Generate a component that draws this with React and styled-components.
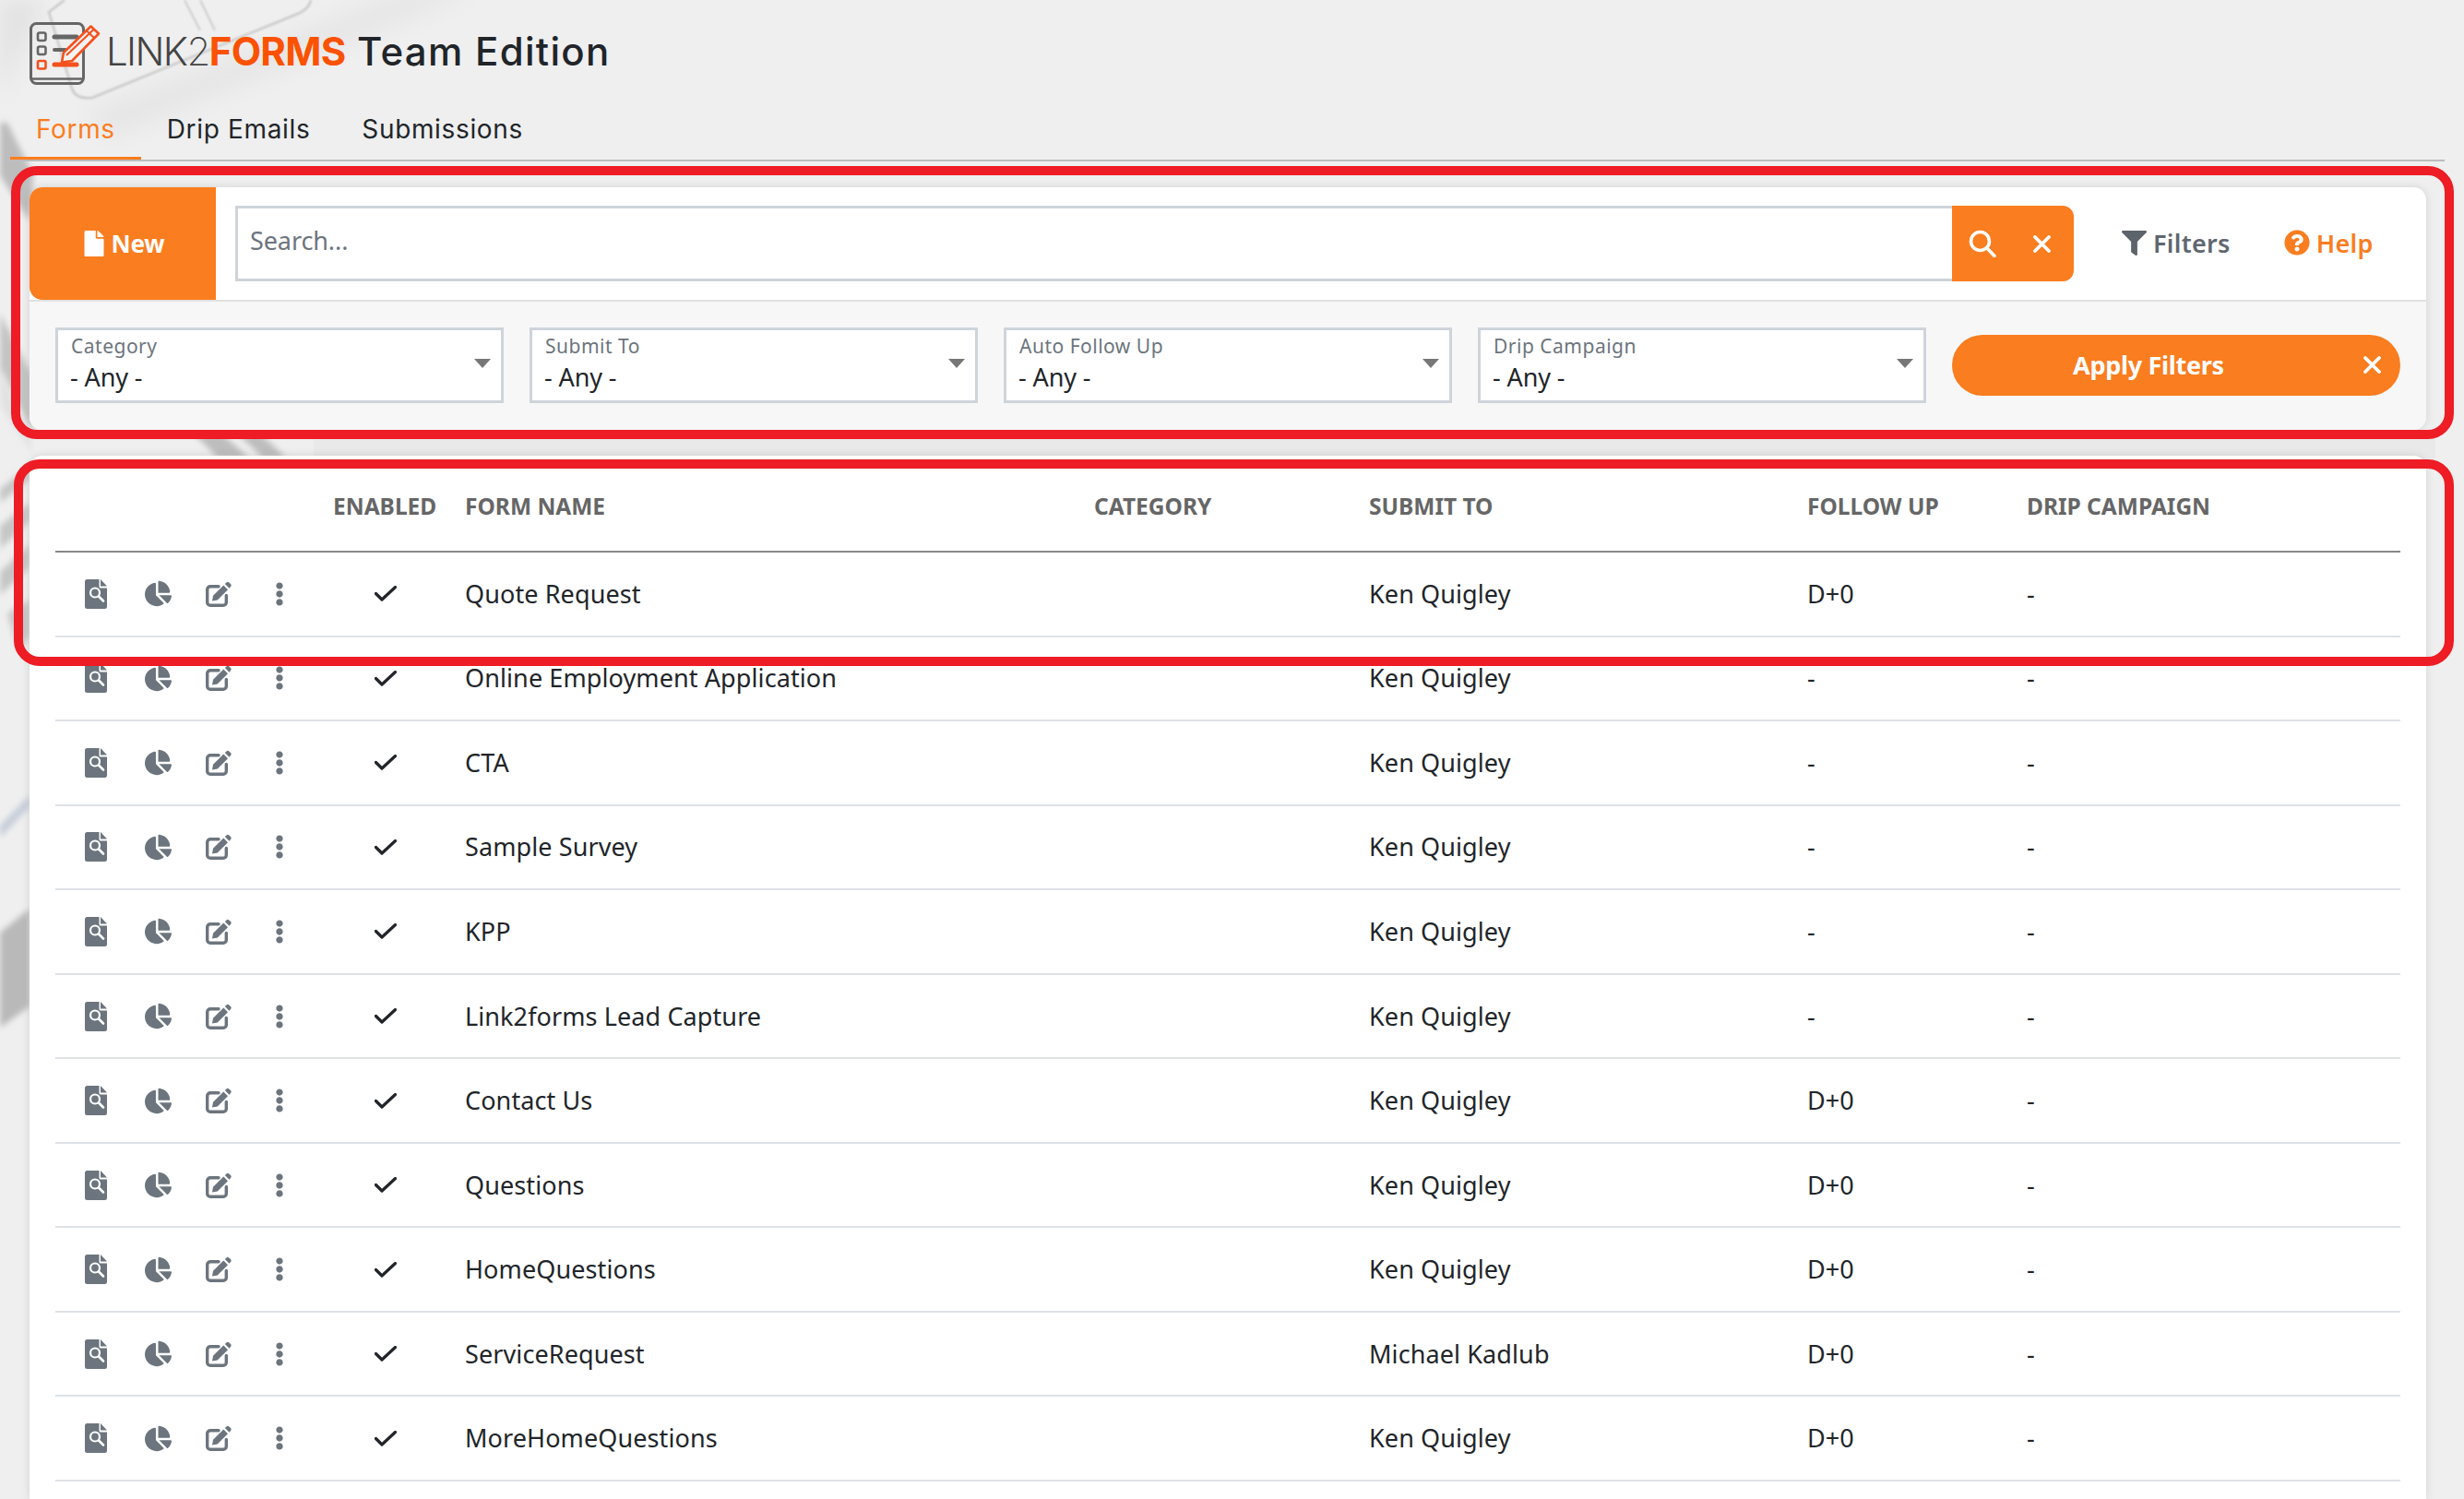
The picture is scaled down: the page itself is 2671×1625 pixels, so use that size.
import React from "react";
import styled, { createGlobalStyle } from "styled-components";
import { FaChartPie, FaEllipsisV, FaFile, FaFilter, FaQuestionCircle } from "react-icons/fa";

const ORANGE = "#fa7d1f";
const BODY = `"Noto Sans", "Open Sans", sans-serif`;
const HEAD = `Inter, "Noto Sans", sans-serif`;

const Global = createGlobalStyle`
  html, body { margin: 0; padding: 0; background: #efefef; overflow: hidden; }
  * { box-sizing: border-box; }
  body { font-family: ${BODY}; color: #212529; }
`;

const Page = styled.div`
  position: relative;
  width: 2671px;
  height: 1625px;
  overflow: hidden;
  display: flex;
  flex-direction: column;
`;

const Backdrop = styled.svg`
  position: absolute;
  inset: 0;
  width: 100%;
  height: 100%;
  z-index: 0;
`;

const Foreground = styled.div`
  position: relative;
  z-index: 1;
  display: flex;
  flex-direction: column;
  flex: 1;
  min-height: 0;
`;

const Brand = styled.header`
  height: 108px;
  padding: 22px 0 0 30px;
  display: flex;
  align-items: flex-start;
`;

const BrandText = styled.h1`
  margin: 0 0 0 5px;
  height: 66px;
  display: flex;
  align-items: center;
  font-family: ${HEAD};
  font-size: 42px;
  font-weight: 500;
  color: #212529;
  white-space: pre;
  letter-spacing: 1.3px;
`;

const BrandLink = styled.span`
  font-weight: ${(p) => p.$w};
  color: #444;
  letter-spacing: -1.6px;
`;

const BrandForms = styled.span`
  font-weight: 700;
  color: #fb5200;
  letter-spacing: -0.7px;
`;

const Tabs = styled.nav`
  margin: 0 21px 0 11px;
  height: 67px;
  display: flex;
  border-bottom: 2px solid #bdbdbd;
`;

const Tab = styled.a`
  height: 65px;
  padding: 1px 28px 0;
  display: flex;
  align-items: center;
  font-family: ${HEAD};
  font-size: 28px;
  font-weight: 400;
  letter-spacing: 0.65px;
  color: ${(p) => (p.$active ? ORANGE : "#212529")};
  border-bottom: 3px solid ${(p) => (p.$active ? ORANGE : "transparent")};
`;

const Card = styled.section`
  margin: 28px 41px 0 32px;
  border-radius: 14px;
  background: #fff;
  box-shadow: 0 0 10px rgba(0, 0, 0, 0.12);
`;

const TableCard = styled(Card)`
  flex: 1;
  min-height: 0;
  overflow: hidden;
  padding: 0 28px;
  border-radius: 14px 14px 0 0;
`;

const SearchBar = styled.div`
  height: 124px;
  display: flex;
  align-items: center;
  border-bottom: 2px solid #e0e0e0;
`;

const NewButton = styled.button`
  width: 202px;
  height: 122px;
  border: 0;
  padding: 0 0 1px;
  border-radius: 14px 0 0 14px;
  background: ${ORANGE};
  color: #fff;
  font: 700 26px ${BODY};
  letter-spacing: -0.2px;
  display: flex;
  align-items: center;
  justify-content: center;
  gap: 5px;
`;

const SearchGroup = styled.div`
  margin-left: 21px;
  width: 1993px;
  height: 82px;
  display: flex;
`;

const SearchInput = styled.input`
  flex: 1;
  min-width: 0;
  height: 100%;
  border: 3px solid #ced4da;
  border-right: 0;
  border-radius: 0;
  padding: 0 0 8px 13px;
  outline: none;
  background: #fff;
  font: 400 27px ${BODY};
  letter-spacing: -0.1px;
  &::placeholder { color: #6c757d; opacity: 1; }
`;

const SearchButtons = styled.div`
  width: 132px;
  display: flex;
  align-items: center;
  background: ${ORANGE};
  border-radius: 0 12px 12px 0;
`;

const SearchButtonCell = styled.span`
  width: 66px;
  height: 100%;
  padding-right: ${(p) => p.$nudge || 0}px;
  display: flex;
  align-items: center;
  justify-content: center;
`;

const BarLink = styled.a`
  margin-left: ${(p) => p.$gap}px;
  padding-bottom: 2px;
  display: flex;
  align-items: center;
  gap: 7px;
  font: 600 27px ${BODY};
  letter-spacing: 0.3px;
  color: ${(p) => p.$color};
`;

const FilterRow = styled.div`
  height: 139px;
  padding: 28px 28px 0;
  background: #f7f7f7;
  border-radius: 0 0 14px 14px;
  display: grid;
  grid-template-columns: repeat(5, 486px);
  column-gap: 28px;
  align-items: start;
`;

const Select = styled.div`
  height: 82px;
  background: #fff;
  border: 3px solid #ced4da;
  padding: 0 14px 4px;
  display: flex;
  align-items: center;
  justify-content: space-between;
`;

const SelectText = styled.div`
  display: flex;
  flex-direction: column;
`;

const SelectLabel = styled.span`
  font-size: 21px;
  line-height: 30px;
  color: #6c757d;
  letter-spacing: 0.5px;
`;

const SelectValue = styled.span`
  font-size: 27px;
  line-height: 38px;
  margin-left: -1px;
  color: #212529;
  letter-spacing: -0.1px;
`;

const Caret = styled.span`
  width: 0;
  height: 0;
  margin: 0 -3px 0 0;
  border-left: 9px solid transparent;
  border-right: 9px solid transparent;
  border-top: 10px solid #777;
`;

const ApplyButton = styled.button`
  height: 66px;
  margin-top: 8px;
  border: 0;
  border-radius: 33px;
  background: ${ORANGE};
  color: #fff;
  padding: 0 21px 2px 131px;
  display: flex;
  align-items: center;
  justify-content: space-between;
  font: 700 27px ${BODY};
  letter-spacing: -0.3px;
`;

const TableRow = styled.div`
  display: grid;
  grid-template-columns: 301px 143px 682px 298px 475px 238px 1fr;
  align-items: center;
  height: ${(p) => (p.$head ? "105px" : "91.55px")};
  padding-top: ${(p) => (p.$head ? "5px" : "0")};
  border-bottom: ${(p) => (p.$head ? "2.5px solid #888" : "2.5px solid #dee2e6")};
`;

const HeadCell = styled.div`
  font-size: 24.5px;
  font-weight: 700;
  color: #666;
  letter-spacing: 0;
  white-space: nowrap;
`;

const Cell = styled.div`
  font-size: 27px;
  color: #212529;
  letter-spacing: 0.1px;
  white-space: nowrap;
  padding-bottom: 1px;
`;

const Actions = styled.div`
  display: flex;
  padding-left: 11px;
`;

const ActionIcon = styled.span`
  width: 66.4px;
  display: flex;
  justify-content: center;
  align-items: center;
  color: #6c757d;
  padding-left: ${(p) => p.$nudge || 0}px;
`;

const EnabledCell = styled.div`
  width: 114px;
  display: flex;
  justify-content: center;
`;

const Marker = styled.div`
  position: absolute;
  z-index: 2;
  left: ${(p) => p.$left}px;
  top: ${(p) => p.$top}px;
  width: ${(p) => 2660 - p.$left}px;
  height: ${(p) => p.$height}px;
  border: 10px solid #ee1c25;
  border-radius: 28px;
`;

const FileSearchIcon = () => (
  <svg width="24" height="32" viewBox="0 0 24 32">
    <path d="M2.5 0H15.5V8A1.5 1.5 0 0 0 17 9.5H24V29.5A2.5 2.5 0 0 1 21.5 32H2.5A2.5 2.5 0 0 1 0 29.5V2.500A2.500 2.500 0 0 1 2.500 0Z" fill="currentColor" />
    <path d="M17 0L24 7.500H17Z" fill="currentColor" />
    <circle cx="11" cy="14.500" r="5" fill="none" stroke="#fff" strokeWidth="2.200" />
    <path d="M15 18.500L20 23.500" stroke="#fff" strokeWidth="2.600" strokeLinecap="round" />
  </svg>
);

const EditIcon = () => (
  <svg width="28" height="28" viewBox="0 0 28 28">
    <path d="M14 5.700H5A3.300 3.300 0 0 0 1.700 9V23A3.300 3.300 0 0 0 5 26.300H19A3.300 3.300 0 0 0 22.300 23V15.500" fill="none" stroke="currentColor" strokeWidth="3.400" strokeLinecap="round" />
    <path d="M7 21.500L8 15.800L19.300 4.600L24 9.300L12.700 20.500Z" fill="currentColor" />
    <path d="M20.800 3.100L22.500 1.400A2 2 0 0 1 25.300 1.400L27 3.100A2 2 0 0 1 27 5.900L25.500 7.800Z" fill="currentColor" />
  </svg>
);

const CheckIcon = () => (
  <svg width="24" height="17" viewBox="0 0 24 17">
    <path d="M1.500 8.500L8 15L22.500 1.500" fill="none" stroke="#212529" strokeWidth="3.200" strokeLinecap="round" strokeLinejoin="round" />
  </svg>
);

const SearchIcon = () => (
  <svg width="30" height="30" viewBox="0 0 30 30">
    <circle cx="12.500" cy="12.500" r="10" fill="none" stroke="#fff" strokeWidth="3.600" />
    <path d="M20 20L28 28.500" stroke="#fff" strokeWidth="3.600" strokeLinecap="round" />
  </svg>
);

const CloseIcon = () => (
  <svg width="19" height="19" viewBox="0 0 19 19">
    <path d="M2 2L17 17M17 2L2 17" stroke="#fff" strokeWidth="3.800" strokeLinecap="round" />
  </svg>
);

const LogoIcon = () => (
  <svg width="80" height="72" viewBox="30 22 80 72">
    <rect x="33.500" y="25.500" width="57" height="65" rx="6" fill="none" stroke="#666" strokeWidth="3" />
    <path d="M34 85.500H90" stroke="#666" strokeWidth="2.500" />
    <rect x="41" y="35.500" width="8.500" height="8.500" rx="2" fill="none" stroke="#666" strokeWidth="2.600" />
    <rect x="41" y="50.500" width="8.500" height="8.500" rx="2" fill="none" stroke="#666" strokeWidth="2.600" />
    <rect x="41" y="66" width="8.500" height="8.500" rx="1.500" fill="none" stroke="#f4511e" strokeWidth="2.600" />
    <path d="M59 40H83" stroke="#666" strokeWidth="5" strokeLinecap="round" />
    <path d="M59 54H71" stroke="#666" strokeWidth="4" strokeLinecap="round" />
    <path d="M59 70H83" stroke="#f4511e" strokeWidth="5" strokeLinecap="round" />
    <path d="M67 67.500L69 57L98.500 28.500L107 36.500L78 66Z" fill="#f3f3f3" stroke="#f4511e" strokeWidth="2.600" strokeLinejoin="round" />
    <path d="M72 60L101.500 32" stroke="#f4511e" strokeWidth="2.200" />
    <path d="M93.500 33L102 41" stroke="#f4511e" strokeWidth="2" />
  </svg>
);

const rows = [
  ["Quote Request", "Ken Quigley", "D+0"],
  ["Online Employment Application", "Ken Quigley", "-"],
  ["CTA", "Ken Quigley", "-"],
  ["Sample Survey", "Ken Quigley", "-"],
  ["KPP", "Ken Quigley", "-"],
  ["Link2forms Lead Capture", "Ken Quigley", "-"],
  ["Contact Us", "Ken Quigley", "D+0"],
  ["Questions", "Ken Quigley", "D+0"],
  ["HomeQuestions", "Ken Quigley", "D+0"],
  ["ServiceRequest", "Michael Kadlub", "D+0"],
  ["MoreHomeQuestions", "Ken Quigley", "D+0"],
];

const filters = ["Category", "Submit To", "Auto Follow Up", "Drip Campaign"];

export default function App() {
  return (
    <Page>
      <Global />
      <Backdrop viewBox="0 0 2671 1625">
        <defs>
          <filter id="soft"><feGaussianBlur stdDeviation="3" /></filter>
          <filter id="line"><feGaussianBlur stdDeviation="0.8" /></filter>
          <filter id="softer"><feGaussianBlur stdDeviation="12" /></filter>
        </defs>
        <path d="M0 0H50L20 60L0 110Z" fill="#e2e2e2" filter="url(#softer)" />
        <path d="M90 122L440 -10H520L120 150Z" fill="#e6e6e6" filter="url(#softer)" />
        <path d="M70 0L53 13L78 96Q82 108 100 106L325 14Q336 8 337 0" fill="none" stroke="#c9c9c9" strokeWidth="2.500" filter="url(#line)" />
        <path d="M200 0L217 33M217 0L233 33" stroke="#cccccc" strokeWidth="2" filter="url(#line)" />
        <path d="M0 133H8L36 190L32 240L0 190Z" fill="#bdbdbd" filter="url(#soft)" />
        <path d="M0 340L34 405V470L0 400Z" fill="#c4c4c4" filter="url(#soft)" />
        <path d="M0 400L34 470V490L0 440Z" fill="#e2e2e2" filter="url(#soft)" />
        <path d="M210 470H240L270 496H236ZM255 468H280L310 496H285Z" fill="#bdbdbd" filter="url(#soft)" />
        <path d="M340 468H2640V498H340Z" fill="#e4e4e4" opacity="0.6" />
        <path d="M0 530L32 505V520L0 545ZM0 570L32 545V565L0 595ZM0 620L32 590V615L0 645ZM8 665L32 650V690L20 705Z" fill="#c6c6c6" filter="url(#soft)" />
        <path d="M0 895L32 862V875L0 908Z" fill="#c5ccd8" filter="url(#soft)" />
        <path d="M0 1011L32 985V1091L0 1114Z" fill="#b9b9b9" filter="url(#soft)" />
      </Backdrop>
      <Foreground>
        <Brand>
          <LogoIcon />
          <BrandText>
            <BrandLink $w={300}>LINK</BrandLink>
            <BrandLink $w={200}>2</BrandLink>
            <BrandForms>FORMS</BrandForms>
            {" Team Edition"}
          </BrandText>
        </Brand>
        <Tabs>
          <Tab $active>Forms</Tab>
          <Tab>Drip Emails</Tab>
          <Tab>Submissions</Tab>
        </Tabs>
        <Card>
          <SearchBar>
            <NewButton><FaFile size={28} />New</NewButton>
            <SearchGroup>
              <SearchInput placeholder="Search..." />
              <SearchButtons>
                <SearchButtonCell><SearchIcon /></SearchButtonCell>
                <SearchButtonCell $nudge={3}><CloseIcon /></SearchButtonCell>
              </SearchButtons>
            </SearchGroup>
            <BarLink $gap={52} $color="#5f6770"><FaFilter size={27} color="#5c636a" />Filters</BarLink>
            <BarLink $gap={58} $color={ORANGE}><FaQuestionCircle size={28} />Help</BarLink>
          </SearchBar>
          <FilterRow>
            {filters.map((label) => (
              <Select key={label}>
                <SelectText>
                  <SelectLabel>{label}</SelectLabel>
                  <SelectValue>- Any -</SelectValue>
                </SelectText>
                <Caret />
              </Select>
            ))}
            <ApplyButton><span>Apply Filters</span><CloseIcon /></ApplyButton>
          </FilterRow>
        </Card>
        <TableCard>
          <TableRow $head>
            <span />
            <HeadCell>ENABLED</HeadCell>
            <HeadCell>FORM NAME</HeadCell>
            <HeadCell>CATEGORY</HeadCell>
            <HeadCell>SUBMIT TO</HeadCell>
            <HeadCell>FOLLOW UP</HeadCell>
            <HeadCell>DRIP CAMPAIGN</HeadCell>
          </TableRow>
          {rows.map(([name, submit, follow]) => (
            <TableRow key={name}>
              <Actions>
                <ActionIcon><FileSearchIcon /></ActionIcon>
                <ActionIcon $nudge={2}><FaChartPie size={29} /></ActionIcon>
                <ActionIcon><EditIcon /></ActionIcon>
                <ActionIcon><FaEllipsisV size={26} /></ActionIcon>
              </Actions>
              <EnabledCell><CheckIcon /></EnabledCell>
              <Cell>{name}</Cell>
              <Cell />
              <Cell>{submit}</Cell>
              <Cell>{follow}</Cell>
              <Cell>-</Cell>
            </TableRow>
          ))}
        </TableCard>
      </Foreground>
      <Marker $left={12} $top={180} $height={296} />
      <Marker $left={15} $top={498} $height={224} />
    </Page>
  );
}
